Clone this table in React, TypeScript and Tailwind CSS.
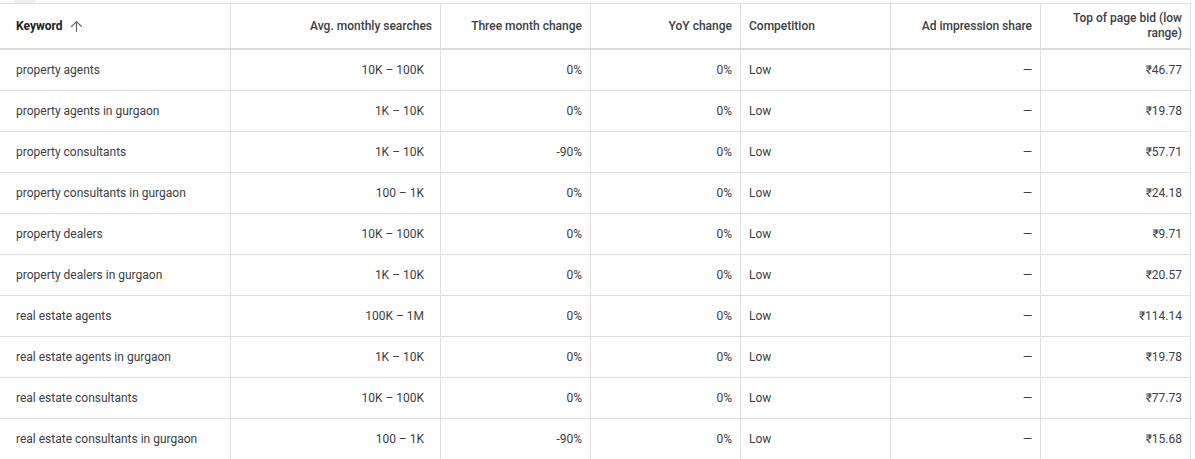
import { ArrowUp } from "lucide-react";

type Row = {
  keyword: string;
  searches: string;
  threeMonth: string;
  yoy: string;
  competition: string;
  share: string;
  bid: string;
};

const rows: Row[] = [
  { keyword: "property agents", searches: "10K – 100K", threeMonth: "0%", yoy: "0%", competition: "Low", share: "—", bid: "₹46.77" },
  { keyword: "property agents in gurgaon", searches: "1K – 10K", threeMonth: "0%", yoy: "0%", competition: "Low", share: "—", bid: "₹19.78" },
  { keyword: "property consultants", searches: "1K – 10K", threeMonth: "-90%", yoy: "0%", competition: "Low", share: "—", bid: "₹57.71" },
  { keyword: "property consultants in gurgaon", searches: "100 – 1K", threeMonth: "0%", yoy: "0%", competition: "Low", share: "—", bid: "₹24.18" },
  { keyword: "property dealers", searches: "10K – 100K", threeMonth: "0%", yoy: "0%", competition: "Low", share: "—", bid: "₹9.71" },
  { keyword: "property dealers in gurgaon", searches: "1K – 10K", threeMonth: "0%", yoy: "0%", competition: "Low", share: "—", bid: "₹20.57" },
  { keyword: "real estate agents", searches: "100K – 1M", threeMonth: "0%", yoy: "0%", competition: "Low", share: "—", bid: "₹114.14" },
  { keyword: "real estate agents in gurgaon", searches: "1K – 10K", threeMonth: "0%", yoy: "0%", competition: "Low", share: "—", bid: "₹19.78" },
  { keyword: "real estate consultants", searches: "10K – 100K", threeMonth: "0%", yoy: "0%", competition: "Low", share: "—", bid: "₹77.73" },
  { keyword: "real estate consultants in gurgaon", searches: "100 – 1K", threeMonth: "-90%", yoy: "0%", competition: "Low", share: "—", bid: "₹15.68" },
];

const cols = "grid grid-cols-[231px_210px_150px_150px_150px_150px_150px]";
const cell = "flex items-center border-r border-[#e0e0e0] px-2";

export default function App() {
  return (
    <div className="w-[1195px] h-[459px] overflow-hidden bg-white font-['Roboto',sans-serif] text-[12px]">
      <div className="relative h-[3px]">
        <div className="absolute left-[14px] top-0 h-[3px] w-[22px] rounded-b bg-[#eeeeee]" />
      </div>
      <div className="w-[1191px] border-t border-[#e0e0e0]">
        <div className={`${cols} h-[46px] border-b-2 border-[#dadce0] text-[#3c4043] font-medium leading-[15px]`}>
          <div className={`${cell} pl-4 font-bold text-[#202124]`}>
            Keyword
            <ArrowUp className="ml-[5px] size-[17px] text-[#5f6368]" strokeWidth={1.5} />
          </div>
          <div className={`${cell} justify-end`}>Avg. monthly searches</div>
          <div className={`${cell} justify-end`}>Three month change</div>
          <div className={`${cell} justify-end`}>YoY change</div>
          <div className={cell}>Competition</div>
          <div className={`${cell} justify-end`}>Ad impression share</div>
          <div className={`${cell} justify-end text-right`}>Top of page bid (low range)</div>
        </div>
        {rows.map((r) => (
          <div key={r.keyword} className={`${cols} h-[41px] border-b border-[#e0e0e0] text-[#3c4043]`}>
            <div className={`${cell} pl-4`}>{r.keyword}</div>
            <div className={`${cell} justify-end pr-4`}>{r.searches}</div>
            <div className={`${cell} justify-end`}>{r.threeMonth}</div>
            <div className={`${cell} justify-end`}>{r.yoy}</div>
            <div className={cell}>{r.competition}</div>
            <div className={`${cell} justify-end`}>{r.share}</div>
            <div className={`${cell} justify-end`}>{r.bid}</div>
          </div>
        ))}
      </div>
    </div>
  );
}
